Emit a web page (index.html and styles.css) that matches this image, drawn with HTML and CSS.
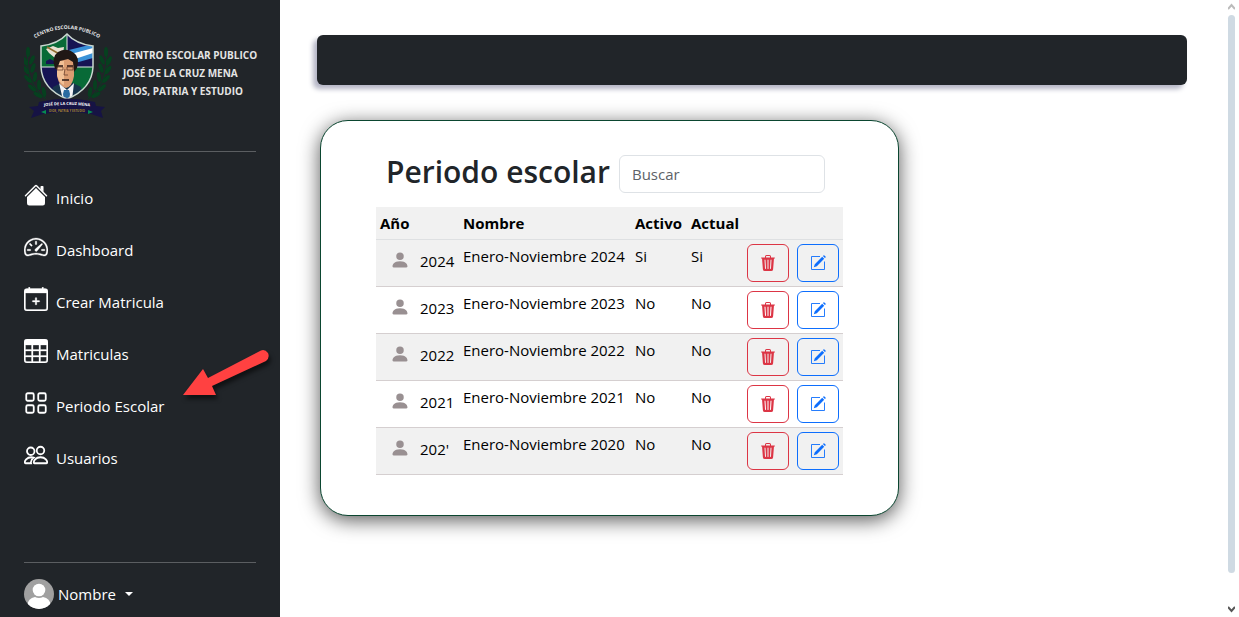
FILE: index.html
```html
<!DOCTYPE html>
<html lang="es">
<head>
<meta charset="utf-8">
<title>Periodo escolar</title>
<link rel="stylesheet" href="styles.css">
</head>
<body>
<svg class="sprite" aria-hidden="true">
  <symbol id="i-person" viewBox="0 0 16 16"><path d="M3 14s-1 0-1-1 1-4 6-4 6 3 6 4-1 1-1 1H3zm5-6a3 3 0 1 0 0-6 3 3 0 0 0 0 6z"/></symbol>
  <symbol id="i-trash" viewBox="0 0 16 16"><path d="M11 1.5v1h3.5a.5.5 0 0 1 0 1h-.538l-.853 10.66A2 2 0 0 1 11.115 16h-6.23a2 2 0 0 1-1.994-1.84L2.038 3.5H1.5a.5.5 0 0 1 0-1H5v-1A1.5 1.5 0 0 1 6.5 0h3A1.5 1.5 0 0 1 11 1.5Zm-5 0v1h4v-1a.5.5 0 0 0-.5-.5h-3a.5.5 0 0 0-.5.5ZM4.5 5.029l.5 8.5a.5.5 0 1 0 .998-.06l-.5-8.5a.5.5 0 1 0-.998.06Zm6.53-.528a.5.5 0 0 0-.528.47l-.5 8.5a.5.5 0 0 0 .998.058l.5-8.5a.5.5 0 0 0-.47-.528ZM8 4.5a.5.5 0 0 0-.5.5v8.5a.5.5 0 0 0 1 0V5a.5.5 0 0 0-.5-.5Z"/></symbol>
  <symbol id="i-edit" viewBox="0 0 16 16"><path d="M10 1.5H1.5v13h13V6.5" fill="none" stroke="currentColor" stroke-width=".9"/><path d="M12.2 1.8l2 2-7.4 7.4-3 1 1-3zM12.9 1.1l.6-.6a.6.6 0 0 1 .9 0l1.1 1.1a.6.6 0 0 1 0 .9l-.6.6z"/></symbol>
</svg>
<div class="app">
  <aside class="sidebar">
    <header class="brand">
      <svg class="crest" viewBox="9 7 90 100" role="img" aria-label="Escudo del Centro Escolar">
        <defs>
          <clipPath id="shield"><path d="M26 31Q43 29 52 19Q61 29 78 31V52Q77 74 52 84Q27 74 26 52Z"/></clipPath>
          <path id="arc" d="M14 27Q52 1 90 27"/>
          <path id="name-arc" d="M22 92Q52 88 82 92"/>
          <g id="laurel" fill="#06401f">
            <path d="M13 36Q9 67 31 84" fill="none" stroke="#06401f"/>
            <ellipse cx="13" cy="37" rx="2" ry="5"/>
            <ellipse cx="10" cy="46" rx="2" ry="5" transform="rotate(-25 10 46)"/><ellipse cx="17" cy="45" rx="2" ry="5" transform="rotate(25 17 45)"/>
            <ellipse cx="11" cy="55" rx="2" ry="5" transform="rotate(-35 11 55)"/><ellipse cx="18" cy="53" rx="2" ry="5" transform="rotate(20 18 53)"/>
            <ellipse cx="13" cy="64" rx="2" ry="5" transform="rotate(-45 13 64)"/><ellipse cx="20" cy="62" rx="2" ry="5" transform="rotate(10 20 62)"/>
            <ellipse cx="17" cy="73" rx="2" ry="5" transform="rotate(-50 17 73)"/><ellipse cx="24" cy="70" rx="2" ry="5"/>
            <ellipse cx="23" cy="80" rx="2" ry="5" transform="rotate(-60 23 80)"/><ellipse cx="29" cy="77" rx="2" ry="5" transform="rotate(-10 29 77)"/>
          </g>
        </defs>
        <use href="#laurel"/><use href="#laurel" transform="translate(104 0) scale(-1 1)"/>
        <text class="crest-title"><textPath href="#arc" startOffset="50%">CENTRO ESCOLAR PUBLICO</textPath></text>
        <g clip-path="url(#shield)">
          <path fill="#086a37" d="M26 18h26v34H26zM52 52h26v34H52z"/>
          <path fill="#161454" d="M52 18h26v34H52zM26 52h26v34H26z"/>
          <path fill="#3b92d8" d="M54 35l24-6v14L60 48z"/><path fill="#fff" d="M56 39l22-6v5L60 44z"/>
          <path fill="#e8e1d2" d="M31 34l7-3 5 2 6-1-1 7-8 4-6-5z"/><path d="M32 32l14 8" stroke="#8f6a2d" stroke-width="1.5"/>
          <path fill="#161454" d="M31 46l4-2 4 2v3h-8z"/>
          <path d="M52 19v66M26 52h52" stroke="#dfe8e3"/>
          <path fill="#17344c" d="M35 86l3-14 8-4h12l8 4 3 14z"/>
          <path fill="#f2f3f6" d="M44 68l8 7 7-7-2 17h-9z"/><path fill="#2a6ba1" d="M49 75h5l1 4-1 6h-5l-1-6z"/>
          <path fill="#dc9d72" d="M42 43h17v18q-2 11-8 12-7-2-9-12z"/>
          <path fill="#f2c096" d="M42 46h7v24q-5-2-7-10z"/>
          <path fill="#201715" d="M40 54q-4-12 3-17 9-5 16 1 6 4 3 15l-3 4-1-10-5-3-8 2-3 8z"/>
          <path d="M42 51h6M52 51h6M47 65h7" stroke="#2a1714" stroke-width="1.5"/>
          <path d="M42 52h6v3h-6zM52 52h6v3h-6zM50 54l-1 6h4" fill="none" stroke="#5b3326" stroke-width=".7"/>
        </g>
        <path d="M26 31Q43 29 52 19Q61 29 78 31V52Q77 74 52 84Q27 74 26 52Z" fill="none" stroke="#c9d8d0" stroke-width="1.5"/>
        <path fill="#161344" d="M24 87Q52 80 80 87l1 4 9 1-4 4 2 7-12-4q-24-4-48 0l-12 4 3-7-5-4 9-1z"/>
        <text class="crest-name"><textPath href="#name-arc" startOffset="50%">JOSÉ DE LA CRUZ MENA</textPath></text>
        <text class="crest-motto" x="52" y="97">DIOS, PATRIA Y ESTUDIO</text>
        <path fill="#078c50" d="M31 95l-5 2 5 2zM73 95l5 2-5 2z"/>
      </svg>
      <p class="brand-name">CENTRO ESCOLAR PUBLICO<br>JOSÉ DE LA CRUZ MENA<br>DIOS, PATRIA Y ESTUDIO</p>
    </header>
    <nav class="menu">
      <a href="#inicio"><svg viewBox="0 0 16 16"><path d="M8 3.293l6 6V13.5a1.5 1.5 0 0 1-1.5 1.5h-9A1.5 1.5 0 0 1 2 13.5V9.293l6-6zm5-.793V6l-2-2V2.5a.5.5 0 0 1 .5-.5h1a.5.5 0 0 1 .5.5z"/><path d="M7.293 1.5a1 1 0 0 1 1.414 0l6.647 6.646a.5.5 0 0 1-.708.708L8 2.207 1.354 8.854a.5.5 0 1 1-.708-.708L7.293 1.5z"/></svg><span>Inicio</span></a>
      <a href="#dashboard"><svg class="bold" viewBox="0 0 16 16"><path d="M8 4a.5.5 0 0 1 .5.5V6a.5.5 0 0 1-1 0V4.5A.5.5 0 0 1 8 4zM3.732 5.732a.5.5 0 0 1 .707 0l.915.914a.5.5 0 1 1-.708.708l-.914-.915a.5.5 0 0 1 0-.707zM2 10a.5.5 0 0 1 .5-.5h1.586a.5.5 0 0 1 0 1H2.5A.5.5 0 0 1 2 10zm9.5 0a.5.5 0 0 1 .5-.5h1.5a.5.5 0 0 1 0 1H12a.5.5 0 0 1-.5-.5zm.754-4.246a.389.389 0 0 0-.527-.02L7.547 9.31a.91.91 0 1 0 1.302 1.258l3.434-4.297a.389.389 0 0 0-.029-.518z"/><path fill-rule="evenodd" d="M0 10a8 8 0 1 1 15.547 2.661c-.442 1.253-1.845 1.602-2.932 1.25C11.309 13.488 9.475 13 8 13c-1.474 0-3.31.488-4.615.911-1.087.352-2.49.003-2.932-1.25A7.988 7.988 0 0 1 0 10zm8-7a7 7 0 0 0-6.603 9.329c.203.575.923.876 1.68.63C4.397 12.533 6.358 12 8 12s3.604.532 4.923.96c.757.245 1.477-.056 1.68-.631A7 7 0 0 0 8 3z"/></svg><span>Dashboard</span></a>
      <a href="#crear"><svg class="bold" viewBox="0 0 16 16"><path d="M8 7a.5.5 0 0 1 .5.5V9H10a.5.5 0 0 1 0 1H8.5v1.5a.5.5 0 0 1-1 0V10H6a.5.5 0 0 1 0-1h1.5V7.5A.5.5 0 0 1 8 7z"/><path d="M3.5 0a.5.5 0 0 1 .5.5V1h8V.5a.5.5 0 0 1 1 0V1h1a2 2 0 0 1 2 2v11a2 2 0 0 1-2 2H2a2 2 0 0 1-2-2V3a2 2 0 0 1 2-2h1V.5a.5.5 0 0 1 .5-.5zM1 4v10a1 1 0 0 0 1 1h12a1 1 0 0 0 1-1V4H1z"/></svg><span>Crear Matricula</span></a>
      <a href="#matriculas"><svg class="bold" viewBox="0 0 16 16"><path d="M0 2a2 2 0 0 1 2-2h12a2 2 0 0 1 2 2v12a2 2 0 0 1-2 2H2a2 2 0 0 1-2-2V2zm15 2h-4v3h4V4zm0 4h-4v3h4V8zm0 4h-4v3h3a1 1 0 0 0 1-1v-2zm-5 3v-3H6v3h4zm-5 0v-3H1v2a1 1 0 0 0 1 1h3zm-4-4h4V8H1v3zm0-4h4V4H1v3zm5-3v3h4V4H6zm4 4H6v3h4V8z"/></svg><span>Matriculas</span></a>
      <a href="#periodo"><svg viewBox="0 0 16 16"><g fill="none" stroke="currentColor" stroke-width="1.2"><rect x="1.5" y="1.5" width="5" height="5" rx="1"/><rect x="9.5" y="1.5" width="5" height="5" rx="1"/><rect x="1.5" y="9.5" width="5" height="5" rx="1"/><rect x="9.5" y="9.5" width="5" height="5" rx="1"/></g></svg><span>Periodo Escolar</span></a>
      <a href="#usuarios"><svg viewBox="0 0 16 16"><g fill="none" stroke="currentColor" stroke-width="1.2"><circle cx="11" cy="5" r="2.5"/><circle cx="4.5" cy="5.5" r="2.5"/><path d="M7 13.5h8q.5 0 .5-.5c0-1-1-3.5-4.5-3.5S6.5 12 6.5 13q0 .5.5.5zM6.500 9.700Q5.800 9.500 5 9.500C1.500 9.500.5 12 .5 13q0 .5.5.5h3.700Q4.200 11.500 6.500 9.700z"/></g></svg><span>Usuarios</span></a>
    </nav>
    <footer class="account">
      <button class="user" type="button">
        <svg class="avatar" viewBox="0 0 30 30"><defs><clipPath id="round"><circle cx="15" cy="15" r="15"/></clipPath></defs><g clip-path="url(#round)"><path fill="#a0a0a0" d="M0 0h30v30H0z"/><circle cx="15" cy="11" r="6.3" fill="#fff"/><path fill="#fff" d="M3 27q1-8 8-9 4 2 8 0 7 1 8 9v4H3z"/></g></svg>
        <span>Nombre</span><i class="caret"></i>
      </button>
    </footer>
    <svg class="pointer" viewBox="0 0 100 60" aria-hidden="true"><path d="M9 45L29 19 34 28 87 .5Q91-1 94 3 96 8 92 11L38 36 42 45Z"/></svg>
  </aside>
  <main class="content">
    <div class="topbar"></div>
    <section class="card">
      <div class="card-head">
        <h1>Periodo escolar</h1>
        <input type="search" placeholder="Buscar" aria-label="Buscar">
      </div>
      <table>
        <colgroup><col class="c-year"><col class="c-name"><col class="c-flag"><col class="c-flag"><col class="c-act"><col class="c-act"></colgroup>
        <thead><tr><th>Año</th><th>Nombre</th><th>Activo</th><th>Actual</th><th></th><th></th></tr></thead>
        <tbody>
          <tr><td><div class="year"><svg><use href="#i-person"/></svg>2024</div></td><td>Enero-Noviembre 2024</td><td>Si</td><td>Si</td><td><button class="btn del" type="button" aria-label="Eliminar"><svg><use href="#i-trash"/></svg></button></td><td><button class="btn edit" type="button" aria-label="Editar"><svg><use href="#i-edit"/></svg></button></td></tr>
          <tr><td><div class="year"><svg><use href="#i-person"/></svg>2023</div></td><td>Enero-Noviembre 2023</td><td>No</td><td>No</td><td><button class="btn del" type="button" aria-label="Eliminar"><svg><use href="#i-trash"/></svg></button></td><td><button class="btn edit" type="button" aria-label="Editar"><svg><use href="#i-edit"/></svg></button></td></tr>
          <tr><td><div class="year"><svg><use href="#i-person"/></svg>2022</div></td><td>Enero-Noviembre 2022</td><td>No</td><td>No</td><td><button class="btn del" type="button" aria-label="Eliminar"><svg><use href="#i-trash"/></svg></button></td><td><button class="btn edit" type="button" aria-label="Editar"><svg><use href="#i-edit"/></svg></button></td></tr>
          <tr><td><div class="year"><svg><use href="#i-person"/></svg>2021</div></td><td>Enero-Noviembre 2021</td><td>No</td><td>No</td><td><button class="btn del" type="button" aria-label="Eliminar"><svg><use href="#i-trash"/></svg></button></td><td><button class="btn edit" type="button" aria-label="Editar"><svg><use href="#i-edit"/></svg></button></td></tr>
          <tr><td><div class="year"><svg><use href="#i-person"/></svg>202'</div></td><td>Enero-Noviembre 2020</td><td>No</td><td>No</td><td><button class="btn del" type="button" aria-label="Eliminar"><svg><use href="#i-trash"/></svg></button></td><td><button class="btn edit" type="button" aria-label="Editar"><svg><use href="#i-edit"/></svg></button></td></tr>
        </tbody>
      </table>
    </section>
  </main>
  <div class="scroll" aria-hidden="true">
    <svg viewBox="0 0 7 7"><path d="M0 6l3.5-4L7 6" stroke="#bbb"/></svg>
    <div class="thumb"></div>
    <svg viewBox="0 0 7 7"><path d="M0 1l3.5 4L7 1" stroke="#555"/></svg>
  </div>
</div>
</body>
</html>
```
FILE: styles.css
```css
* { box-sizing: border-box; }
body { margin: 0; font: 15px/24px "Open Sans", "Noto Sans", sans-serif; color: #000; background: #fff; }
svg { display: block; fill: currentColor; flex: none; }
button, input { font: inherit; }
.sprite { position: absolute; width: 0; height: 0; }
.app { display: flex; min-height: 100vh; }

.sidebar { position: relative; display: flex; flex-direction: column; flex: none; width: 280px; padding: 22px 24px 8px; background: #212529; color: #fff; }
.brand { display: flex; align-items: center; gap: 9px; padding-bottom: 29px; border-bottom: 1px solid #5b5e61; }
.crest { width: 90px; height: 100px; }
.crest text { fill: #e8e8ea; font-weight: 700; text-anchor: middle; }
.crest .crest-title { font-size: 5px; }
.crest .crest-name { font-size: 4px; fill: #fff; }
.crest .crest-motto { font-size: 3px; fill: #a58a24; }
.brand-name { margin: 2px 0 0; font-size: 10px; line-height: 18px; font-weight: 700; white-space: nowrap; color: #e4e4e4; }
.menu { display: flex; flex-direction: column; margin: 20px 0 auto; }
.menu a { display: flex; gap: 8px; padding: 11px 0; line-height: 30px; color: #fff; text-decoration: none; }
.menu svg { width: 24px; height: 24px; }
.menu .bold { stroke: currentColor; stroke-width: .2; }
.account { padding-top: 16px; border-top: 1px solid #5b5e61; }
.user { display: flex; align-items: center; gap: 4px; padding: 0; border: 0; background: none; color: #fff; }
.avatar { width: 30px; height: 30px; }
.caret { margin-left: 5px; border: 4px solid transparent; border-top-color: #fff; border-bottom: 0; }
.pointer { position: absolute; left: 174px; top: 350px; width: 100px; height: 60px; overflow: visible; fill: #ff4141; filter: drop-shadow(2px 4px 2px #0008); }

.content { flex: 1; min-width: 0; padding: 35px 41px 35px 37px; }
.topbar { height: 50px; border-radius: 6px; background: #212529; box-shadow: -4px 4px 5px #b4b5c5; }
.card { width: fit-content; margin: 35px 0 0 3px; padding: 34px 55px 40px; border: 1px solid #0b4630; border-radius: 28px; background: #fff; box-shadow: 0 4px 20px #000a; }
.card-head { display: flex; align-items: flex-start; gap: 9px; padding: 0 18px 0 10px; margin-bottom: 14px; }
.card h1 { flex: none; margin: 0; font-size: 30px; line-height: 34px; font-weight: 600; color: #212529; }
.card input { flex: 1; min-width: 0; width: 0; height: 38px; padding: 6px 12px; border: 1px solid #dee2e6; border-radius: 6px; background: #fff; outline: 0; }
.card input::placeholder { color: #5d6268; opacity: 1; }
table { border-collapse: collapse; table-layout: fixed; width: 467px; }
.c-year { width: 83px; }
.c-name { width: 172px; }
.c-flag { width: 56px; }
.c-act { width: 50px; }
th, td { padding: 4px; text-align: left; vertical-align: top; border-bottom: 1px solid #d5cfd0; white-space: nowrap; }
th { font-weight: 700; border-color: #dee0e2; }
thead tr, tbody tr:nth-child(odd) { background: #f1f1f1; }
.year { display: flex; align-items: center; gap: 10px; padding: 5px 0 0 10px; }
.year svg { width: 20px; height: 20px; color: #999092; margin-top: -2px; }
.btn { display: flex; align-items: center; justify-content: center; width: 42px; height: 38px; padding: 0; border: 1px solid; border-radius: 6px; background: none; }
.btn svg { width: 16px; height: 16px; }
.del { color: #dc3545; }
.edit { color: #0d6efd; }

.scroll { display: flex; flex-direction: column; flex: none; width: 11px; padding: 3px 4px 4px 0; gap: 5px; }
.scroll svg { width: 7px; height: 7px; fill: none; stroke-width: 2; }
.thumb { flex: 1; margin-bottom: 28px; border-radius: 4px; background: #cfdae3; }
```
